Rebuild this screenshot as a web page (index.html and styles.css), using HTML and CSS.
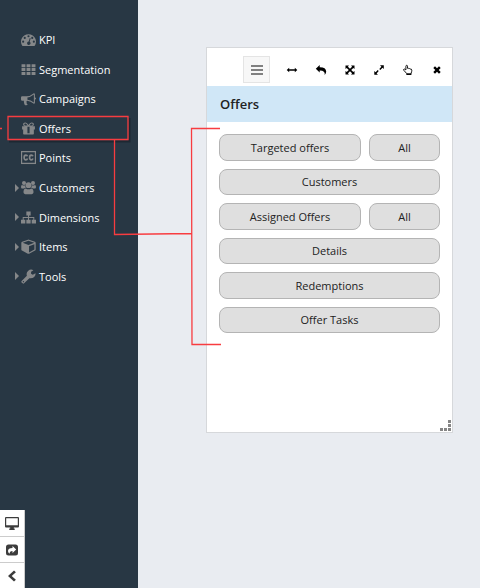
FILE: index.html
```html
<!DOCTYPE html>
<html lang="en">
<head>
<meta charset="utf-8">
<title>Offers</title>
<link rel="stylesheet" href="styles.css">
</head>
<body>
<div class="app">
  <aside class="sidebar">
    <nav>
      <ul class="menu">
        <li><a href="#"><span class="caret"></span><svg class="icon" viewBox="0 0 14 14"><path fill-rule="evenodd" d="M7 2a7 7 0 0 0-5.800 10.800q.2.200.5.200h10.600q.3 0 .5-.2A7 7 0 0 0 7 2zM7 3a1 1 0 1 1 0 2 1 1 0 0 1 0-2zM3.500 4.500a1 1 0 1 1 0 2 1 1 0 0 1 0-2zM2 8a1 1 0 1 1 0 2 1 1 0 0 1 0-2zM12 8a1 1 0 1 1 0 2 1 1 0 0 1 0-2zM10.500 4.500a1 1 0 1 1 0 2 1 1 0 0 1 0-2zM8.200 5.700l.8.2-.9 3.200a1.600 1.600 0 1 1-.9-.2z"/></svg>KPI</a></li>
        <li><a href="#"><span class="caret"></span><svg class="icon" viewBox="0 0 14 14"><path d="M.5 2h3.600v2.800H.5zM5.200 2h3.600v2.800H5.200zM9.900 2h3.600v2.800H9.900zM.5 5.700h3.600v2.800H.5zM5.200 5.700h3.600v2.800H5.200zM9.900 5.700h3.600v2.800H9.900zM.5 9.400h3.600v2.800H.5zM5.200 9.400h3.600v2.800H5.200zM9.900 9.400h3.600v2.800H9.900z"/></svg>Segmentation</a></li>
        <li><a href="#"><span class="caret"></span><svg class="icon" viewBox="0 0 14 14"><path fill-rule="evenodd" d="M13 6a1 1 0 0 1 0 2v3a1 1 0 0 1-1 1Q9 9.300 5.900 9.100c-.9.300-1.100 1.200-.5 1.800-.4.600 0 1.100.9 1.800-.5.900-2.200.9-2.900.2C3 11.700 2.400 10.500 2.800 9H1.300A1.200 1.200 0 0 1 0 7.800V6.200A1.200 1.200 0 0 1 1.300 5H5q3.500 0 7-3a1 1 0 0 1 1 1zM12 3.300Q9 5.700 6 6v2.100q3 .3 6 2.600z"/></svg>Campaigns</a></li>
        <li><a href="#"><span class="caret"></span><svg class="icon" viewBox="0 0 14 14"><path fill-rule="evenodd" d="M1 5h3.500C2.700 5 2 4.200 2 3.200s.8-1.700 1.800-1.700c1.500 0 2.200 1 3.200 2.300 1-1.300 1.700-2.300 3.200-2.300 1 0 1.800.7 1.800 1.700S11.300 5 9.500 5H13v3h-1v4q0 .7-.7.700H2.700Q2 12.700 2 12V8H1zM3.900 2.400a.8.800 0 0 0 0 1.700h2.200C5.200 3 4.700 2.400 3.900 2.400zM10.100 2.400C9.300 2.400 8.800 3 7.900 4.100h2.200a.8.800 0 0 0 0-1.700zM6 5.400v6h2v-6z"/></svg>Offers</a></li>
        <li><a href="#"><span class="caret"></span><svg class="icon" viewBox="0 0 14 14"><g fill="none" stroke="currentColor"><rect x=".5" y="1.500" width="13" height="11" stroke-width="1.200"/><path stroke-width="1.500" d="M6.100 5.900Q5.700 4.800 4.500 4.800 2.900 4.900 2.900 7t1.600 2.200q1.200 0 1.600-1.200M11.200 5.900q-.4-1.100-1.600-1.100Q8 4.900 8 7t1.600 2.200q1.200 0 1.600-1.200"/></g></svg>Points</a></li>
        <li><a href="#"><span class="caret open"></span><svg class="icon" viewBox="0 0 14 14"><circle cx="2.800" cy="2.800" r="1.900"/><circle cx="11.200" cy="2.800" r="1.900"/><circle cx="7" cy="4.800" r="2.700"/><path d="M0 6.500Q0 4.700 1 4.700q1.500.9 2.900.3-.1 1.400.7 2.300Q3.600 7.200 2.800 8H1Q0 8 0 6.500zM14 6.500q0-1.800-1-1.800-1.500.9-2.900.3.100 1.400-.7 2.300 1-.1 1.800.7H13q1 0 1-1.500zM2.300 11.500q0-3.600 2.200-3.600 2.500 1.600 5 0 2.200 0 2.200 3.600 0 1.700-1.700 1.700H4q-1.700 0-1.700-1.700z"/></svg>Customers</a></li>
        <li><a href="#"><span class="caret open"></span><svg class="icon" viewBox="0 0 14 14"><path d="M5 1.500h4v3.600H7.500v1.400h4.900v2.600H14v3.500h-4V9.100h1.500V7.400h-4v1.700H9v3.500H5V9.100h1.500V7.400h-4v1.700H4v3.500H0V9.100h1.600V6.500h4.900V5.100H5z"/></svg>Dimensions</a></li>
        <li><a href="#"><span class="caret open"></span><svg class="icon" viewBox="0 0 14 14"><path fill-rule="evenodd" d="M6.500.6q.5-.2 1 0l5.500 2q.7.300.7 1v6.200q0 .7-.6 1l-5.500 2.900q-.6.300-1.200 0L.9 10.800q-.6-.3-.6-1V3.600q0-.7.7-1zM7 1.700L1.600 3.600 7 5.600l5.400-2zM7.500 12.500l5-2.600V4.800l-5 1.900z"/></svg>Items</a></li>
        <li><a href="#"><span class="caret open"></span><svg class="icon" viewBox="0 0 14 14"><path fill-rule="evenodd" d="M7.800 8.600l-4.900 4.800q-.7.600-1.400 0l-.9-.9q-.6-.7 0-1.400l4.900-4.900A4.200 4.200 0 0 1 11.600 1.200L9.400 2.600v1.900l1.600.9 2.500-1.500q.4 1.900-1.200 3.500T7.800 8.600zM2.200 11.200a.6.600 0 1 0 .1 1.200.6.600 0 0 0-.1-1.200z"/></svg>Tools</a></li>
      </ul>
    </nav>
    <div class="dock">
      <button type="button" aria-label="Display"><svg viewBox="0 0 16 16"><path fill-rule="evenodd" d="M2 2h12q1 0 1 1v8.500q0 1-1 1H9.800v1h.9V15H5.300v-1.500h.9v-1H2q-1 0-1-1V3q0-1 1-1zM2.200 3.200v7h11.600v-7z"/></svg></button>
      <button type="button" aria-label="Share"><svg viewBox="0 0 16 16"><path fill-rule="evenodd" d="M4.500 2.500h7q2.500 0 2.500 2.500v6q0 2.500-2.500 2.500h-7Q2 13.500 2 11V5q0-2.500 2.500-2.500zM8.500 4v2Q4 6.200 4 9q0 1.500 1.600 2.800Q5.400 9.200 8.500 9v2l3.700-3.500z"/></svg></button>
      <button type="button" aria-label="Collapse"><svg viewBox="0 0 16 16"><path d="M10 2.500l1.900 1.800L7.700 8l4.200 3.700-1.900 1.800L4 8z"/></svg></button>
    </div>
  </aside>
  <main class="workspace">
    <section class="panel">
      <div class="toolbar">
        <button type="button" class="menu-button" aria-label="Menu"><svg viewBox="0 0 14 14"><path d="M1 2h12v2H1zM1 6h12v2H1zM1 10h12v2H1z"/></svg></button>
        <button type="button" aria-label="Resize width"><svg viewBox="0 0 12 12"><path d="M.7 6L3.200 3.800v1.500h5.600V3.800L11.300 6 8.800 8.200V6.700H3.200v1.500z"/></svg></button>
        <button type="button" aria-label="Undo"><svg viewBox="0 0 12 12"><path d="M.8 4.700L4.700 1v2.300q6.300-.1 6.500 4.300 0 1.700-1.500 3.400.7-4.600-5-4.500v2z"/></svg></button>
        <button type="button" aria-label="Maximize"><svg viewBox="0 0 12 12"><path d="M1.500 1.500H5L3.900 2.700 6 4.800l2.100-2.100L7 1.500h3.500V5L9.300 3.900 7.200 6l2.100 2.100L10.500 7v3.500H7l1.100-1.200L6 7.200 3.900 9.300 5 10.500H1.500V7l1.200 1.100L4.800 6 2.700 3.900 1.500 5z"/></svg></button>
        <button type="button" aria-label="Expand"><svg viewBox="0 0 12 12"><path d="M7 1.300h3.800V5L9.500 3.800 7.300 6l-1-1 2.100-2.300zM5 10.700H1.300V7l1.300 1.200L4.700 6l1 1-2.100 2.400z"/></svg></button>
        <button type="button" aria-label="Select"><svg viewBox="0 0 12 12"><path fill="#fff" stroke="currentColor" stroke-width=".9" d="M4.700 10.500v-1L1.800 6.300q-.6-.9.200-1.300.6-.2 1.900.9V2.200q.1-.9.800-.9t.8.900v2.100q.8-.4 1.300.3.800-.3 1.300.4 1.600-.3 1.700 1.200 0 1.600-.7 3v1.300z"/><path d="M4.700 9.300h4.400v1.500H4.700z"/></svg></button>
        <button type="button" aria-label="Close"><svg viewBox="0 0 12 12"><path d="M4 2.300l2 2 2-2L9.700 4l-2 2 2 2L8 9.700l-2-2-2 2L2.300 8l2-2-2-2z"/></svg></button>
      </div>
      <h1 class="title">Offers</h1>
      <div class="actions">
        <button type="button">Targeted offers</button>
        <button type="button">All</button>
        <button type="button" class="wide">Customers</button>
        <button type="button">Assigned Offers</button>
        <button type="button">All</button>
        <button type="button" class="wide">Details</button>
        <button type="button" class="wide">Redemptions</button>
        <button type="button" class="wide">Offer Tasks</button>
      </div>
      <svg class="grip" viewBox="0 0 11 11"><path d="M8 0h3v3H8zM8 4h3v3H8zM0 8h3v3H0zM4 8h3v3H4zM8 8h3v3H8z"/></svg>
    </section>
  </main>
  <svg class="callout" width="222" height="346" viewBox="0 0 222 346" aria-hidden="true">
    <path class="shade" d="M9 141.500H129.500V118"/>
    <path d="M0 128.500H2M8 116.500H128V139.500H8zM114.500 140V234.500L191.500 233.500M220 128.500H191.500L192 344.500H221"/>
  </svg>
</div>
</body>
</html>
```
FILE: styles.css
```css
* {
  box-sizing: border-box;
}

body {
  margin: 0;
  background: #e9ecf1;
  color: #222;
  font-family: "Open Sans", sans-serif;
  font-size: 11px;
}

button {
  margin: 0;
  padding: 0;
  border: 0;
  background: none;
  color: inherit;
  font: inherit;
}

svg {
  display: block;
  fill: currentColor;
}

.app {
  position: relative;
  display: flex;
  min-height: 100vh;
}

.sidebar {
  display: flex;
  flex: 0 0 138px;
  flex-direction: column;
  justify-content: space-between;
  padding-top: 25px;
  background: #283744;
}

.menu {
  display: grid;
  grid-auto-rows: 1fr;
  height: 266px;
  margin: 0;
  padding: 0 0 0 15px;
  list-style: none;
}

.menu a {
  display: flex;
  align-items: center;
  height: 100%;
  color: #fff;
  text-decoration: none;
}

.caret {
  width: 6px;
}

.caret.open::before {
  content: "";
  display: block;
  width: 0;
  border: 4px solid transparent;
  border-right: 0;
  border-left-color: #858789;
}

.icon {
  width: 15px;
  height: 15px;
  margin-right: 3px;
  color: #858789;
}

.dock {
  display: flex;
  flex-direction: column;
  width: 25px;
  border-right: 1px solid #ccc;
  background: #fff;
}

.dock button {
  display: flex;
  align-items: center;
  justify-content: center;
  height: 26px;
  color: #3c3c3c;
}

.dock button + button {
  border-top: 1px solid #ccc;
}

.dock svg {
  width: 16px;
  height: 16px;
}

.workspace {
  flex: 1;
  padding: 47px 27px 0 68px;
}

.panel {
  display: flex;
  flex-direction: column;
  min-height: 386px;
  border: 1px solid #d6d8db;
  background: #fff;
}

.toolbar {
  display: flex;
  align-items: center;
  justify-content: flex-end;
  gap: 17px;
  padding: 8px 9px 3px;
  color: #000;
}

.toolbar svg {
  width: 12px;
  height: 12px;
}

.toolbar .menu-button {
  display: flex;
  align-items: center;
  justify-content: center;
  width: 27px;
  height: 27px;
  margin-right: -1px;
  border: 1px solid #e4e4e4;
  background: #f7f7f7;
  color: #808080;
}

.toolbar .menu-button svg {
  width: 14px;
  height: 14px;
}

.title {
  margin: 0;
  padding: 0 13px;
  background: #d0e7f7;
  font-size: 13px;
  font-weight: 600;
  line-height: 36px;
}

.actions {
  display: grid;
  grid-template-columns: 2fr 1fr;
  grid-auto-rows: 1fr;
  gap: 8px;
  height: 223px;
  padding: 12px;
}

.actions button {
  border: 1px solid #b4b4b4;
  border-radius: 8px;
  background: #dfdfdf;
}

.actions .wide {
  grid-column: 1 / -1;
}

.grip {
  width: 11px;
  height: 11px;
  margin: auto 1px 1px auto;
  color: #858585;
}

.callout {
  position: absolute;
  top: 0;
  left: 0;
  fill: none;
  stroke: #f83c40;
  stroke-width: 1.3;
  pointer-events: none;
}

.callout .shade {
  stroke: #1d2832;
  stroke-width: 2px;
}
```
